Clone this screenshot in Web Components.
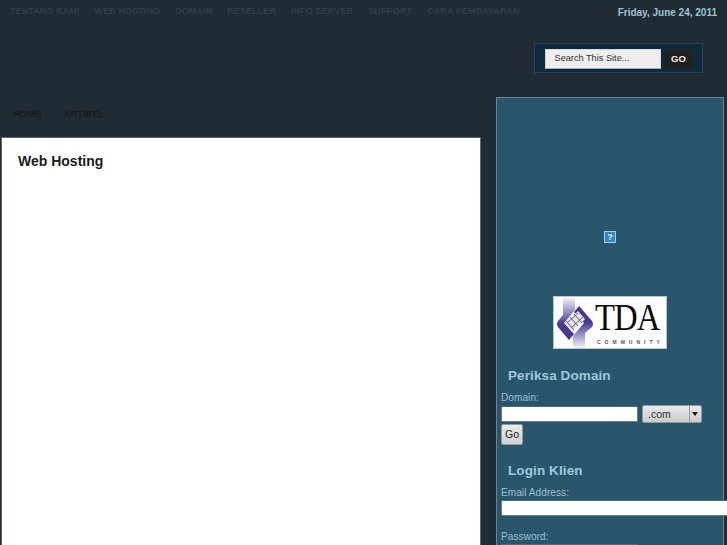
<!DOCTYPE html>
<html><head><meta charset="utf-8">
<style>
html,body{margin:0;padding:0;height:545px;overflow:hidden;background:#212b34;font-family:"Liberation Sans",Arial,sans-serif}
x-page{display:block}
</style></head><body>
<x-page>
  <x-topbar slot="top" date="Friday, June 24, 2011">
    <a>TENTANG KAMI</a><a>WEB HOSTING</a><a>DOMAIN</a><a>RESELLER</a><a>INFO SERVER</a><a>SUPPORT</a><a>CARA PEMBAYARAN</a>
  </x-topbar>
  <x-search slot="top"></x-search>
  <x-subnav slot="left"><a>HOME</a><a>ARTIKEL</a></x-subnav>
  <x-article slot="left" heading="Web Hosting"></x-article>
  <x-sidebar slot="right">
    <x-broken-image></x-broken-image>
    <x-tda-logo></x-tda-logo>
    <x-domain-form></x-domain-form>
    <x-login-form></x-login-form>
  </x-sidebar>
</x-page>
<script>
function def(name,css,html,init){
  customElements.define(name,class extends HTMLElement{
    constructor(){super();const r=this.attachShadow({mode:'open'});r.innerHTML='<style>'+css+'</style>'+html;if(init)this._i=init;}
    connectedCallback(){if(this._i)this._i(this.shadowRoot,this);}
  });
}
def('x-page',`
:host{display:block;width:727px;height:545px;overflow:hidden;position:relative}
.top{height:97px;display:flex;flex-direction:column}
.cols{display:flex;align-items:flex-start}
.left{width:480px;margin-left:1px;flex:none}
.right{margin-left:15px;flex:none}
`,`<div class="top"><slot name="top"></slot></div>
<div class="cols"><div class="left"><slot name="left"></slot></div><div class="right"><slot name="right"></slot></div></div>`);

def('x-topbar',`
:host{display:flex;justify-content:space-between;height:43px;font:bold 9px/11px "Liberation Sans",sans-serif}
nav{display:flex;gap:15px;padding:6px 0 0 10px;color:#2f3e4a;letter-spacing:.1px}
::slotted(a){display:block}
.date{color:#9cc3d3;padding:7px 10px 0 0;font-size:10px}
`,`<nav><slot></slot></nav><div class="date"></div>`,(r,h)=>{r.querySelector('.date').textContent=h.getAttribute('date')});

def('x-search',`
:host{display:flex;align-self:flex-end;box-sizing:border-box;width:169px;height:30px;margin-right:24px;background:#0f2b3b;border:1px solid #1d4659;padding:5px 0 0 10px;gap:3px;align-items:flex-start;font:9px/18px "Liberation Sans",sans-serif}
.i{box-sizing:border-box;width:116px;height:20px;background:#eeeeee;border:1px solid #d3d7da;border-bottom-color:#9aa;color:#333;padding:0 0 0 8.5px;line-height:16px;font-size:9.2px}
.b{width:29px;height:18px;margin-top:1px;background:#212121;color:#eee;font-weight:bold;text-align:center;font-size:9.5px;line-height:17px}
`,`<div class="i">Search This Site...</div><div class="b">GO</div>`);

def('x-subnav',`
:host{display:flex;gap:22px;height:40px;box-sizing:border-box;padding:11px 0 0 12px;font:bold 9.5px/12px "Liberation Sans",sans-serif;color:#171b1e}
::slotted(a){display:block}
`,`<slot></slot>`);

def('x-article',`
:host{display:block;box-sizing:border-box;height:420px;background:#fff;border:1px solid #5e6870;border-bottom:0;padding:14px 0 0 16px}
h2{margin:0;font:bold 14px/18px "Liberation Sans",sans-serif;color:#1a1a1a}
`,`<h2></h2>`,(r,h)=>{r.querySelector('h2').textContent=h.getAttribute('heading')});

def('x-sidebar',`
:host{display:block;box-sizing:border-box;width:228px;height:448px;background:#2a566d;border:1px solid #6b8797;border-bottom:0;padding:0}
`,`<slot></slot>`);

def('x-broken-image',`
:host{display:flex;justify-content:center;box-sizing:border-box;height:198px;padding-top:133px}
.b{box-sizing:border-box;width:12px;height:12px;background:#2f86c5;border:1px solid #a9cfe6;color:#e8f3fa;font:bold 9px/10px "Liberation Sans",sans-serif;text-align:center}
`,`<div class="b">?</div>`);

def('x-tda-logo',`
:host{display:block;box-sizing:border-box;width:114px;height:53px;margin:0 0 0 56px;background:#fdfdfd;border:1px solid #b9c6cd;position:relative;overflow:hidden}
svg{display:block;position:absolute;left:0;top:0}
.t{position:absolute;left:41px;top:4px;font:38px/33px "Liberation Serif",serif;color:#0a0a0a;letter-spacing:-1px;transform:scaleX(.86);transform-origin:0 0}
.c{position:absolute;left:43px;top:41.6px;font:bold 5px/6px "Liberation Sans",sans-serif;color:#555;letter-spacing:4px;white-space:nowrap}
`,`<svg width="45" height="52" viewBox="0 0 45 52">
<defs>
<linearGradient id="up" x1="0" y1="0" x2="0" y2="1"><stop offset="0" stop-color="#f0eff7"/><stop offset=".35" stop-color="#9088c2"/><stop offset=".6" stop-color="#4a3c94"/><stop offset="1" stop-color="#43358e"/></linearGradient>
<linearGradient id="dn" x1="0" y1="1" x2="0" y2="0"><stop offset="0" stop-color="#f3f2f9"/><stop offset=".35" stop-color="#9088c2"/><stop offset=".6" stop-color="#4a3c94"/><stop offset="1" stop-color="#43358e"/></linearGradient>
</defs>
<path d="M9 1H21V13L10 26 20 37 15 43 4 30Q2 27 4 24L9 18Z" fill="url(#up)"/>
<path d="M31 51H19V39L30 26 20 15 25 9 38 24Q40 27 38 30L31 36Z" fill="url(#dn)"/>
<path d="M11 26 24 14 31 22 18 35Z" fill="#e9e7f3"/>
<path d="M13 26 24 16M17 31 29 20M12 24 20 33M16 20 24 29M20 17 28 26" stroke="#5f52a6" stroke-width="1" fill="none"/>
</svg><div class="t">TDA</div><div class="c">COMMUNITY</div>`);

const field=`
:host{display:block;font:10px/12px "Liberation Sans",sans-serif;color:#9dbfce;padding-left:4px}
h3{margin:0 0 0 7px;font:bold 13.5px/18px "Liberation Sans",sans-serif;color:#a1c7d9;letter-spacing:.1px}
label{display:block;letter-spacing:.1px}
.in{display:block;box-sizing:border-box;height:16px;background:#fff;border:1px solid #6c7f89;border-top-color:#59686f;border-radius:2px}
`;
def('x-domain-form',field+`
:host{padding-top:18px;height:95px;box-sizing:content-box}
label{margin-top:7px}
.row{display:flex;gap:4px;margin-top:1px;align-items:flex-start}
.in{width:137px;margin-top:1px}
.sel{display:flex;box-sizing:border-box;width:60px;height:18px;background:linear-gradient(#e9e9e9,#cbcbcb);border:1px solid #8f9ba2;border-radius:2px;color:#333;line-height:17px;font-size:10.5px}
.sel span{flex:1;padding-left:5px}
.sel i{width:11px;border-left:1px solid #9a9a9a;position:relative;display:block}
.sel i:after{content:"";position:absolute;left:2px;top:6px;border:3px solid transparent;border-top:4px solid #111;border-bottom:0}
.btn{box-sizing:border-box;width:22px;height:21px;margin-top:1px;text-align:center;background:linear-gradient(#ececec,#cfcfcf);border:1px solid #8f9ba2;border-radius:2px;color:#222;font:10.5px/18px "Liberation Sans",sans-serif}
`,`<h3>Periksa Domain</h3><label>Domain:</label>
<div class="row"><div class="in"></div><div class="sel"><span>.com</span><i></i></div></div>
<div class="btn">Go</div>`);

def('x-login-form',field+`
label{margin-top:7px}
.in{width:240px;margin-top:1px}
.p{width:137px}
.l2{margin-top:15px}
`,`<h3>Login Klien</h3><label>Email Address:</label><div class="in"></div>
<label class="l2">Password:</label><div class="in p"></div>`);
</script>
</body></html>
